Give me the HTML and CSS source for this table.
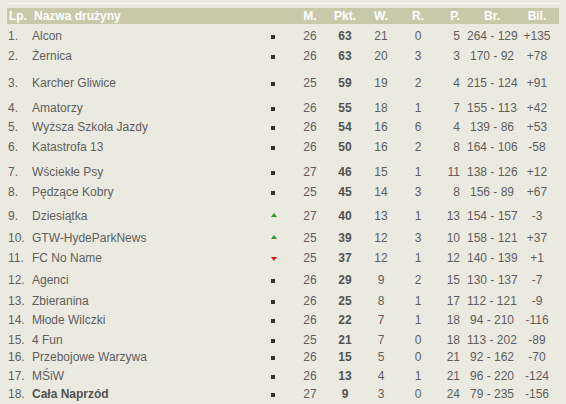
FILE: index.html
```html
<!DOCTYPE html>
<html lang="pl">
<head>
<meta charset="utf-8">
<title>Tabela</title>
<link rel="stylesheet" href="styles.css">
</head>
<body>
<div class="wrap">
  <div class="topline"></div>
  <div class="row head">
    <div class="lp">Lp.</div><div class="name">Nazwa drużyny</div><div class="ind"></div>
    <div class="c">M.</div><div class="c">Pkt.</div><div class="c">W.</div><div class="c">R.</div><div class="p">P.</div><div class="c">Br.</div><div class="c">Bil.</div>
  </div>
  <div class="rows">
    <div class="row"><div class="lp">1.</div><div class="name">Alcon</div><div class="ind"><span class="sq"></span></div><div class="c">26</div><div class="c b">63</div><div class="c">21</div><div class="c">0</div><div class="p">5</div><div class="c">264 - 129</div><div class="c">+135</div></div>
    <div class="row"><div class="lp">2.</div><div class="name">Żernica</div><div class="ind"><span class="sq"></span></div><div class="c">26</div><div class="c b">63</div><div class="c">20</div><div class="c">3</div><div class="p">3</div><div class="c">170 - 92</div><div class="c">+78</div></div>
    <div class="row"><div class="lp">3.</div><div class="name">Karcher Gliwice</div><div class="ind"><span class="sq"></span></div><div class="c">25</div><div class="c b">59</div><div class="c">19</div><div class="c">2</div><div class="p">4</div><div class="c">215 - 124</div><div class="c">+91</div></div>
    <div class="row"><div class="lp">4.</div><div class="name">Amatorzy</div><div class="ind"><span class="sq"></span></div><div class="c">26</div><div class="c b">55</div><div class="c">18</div><div class="c">1</div><div class="p">7</div><div class="c">155 - 113</div><div class="c">+42</div></div>
    <div class="row"><div class="lp">5.</div><div class="name">Wyższa Szkoła Jazdy</div><div class="ind"><span class="sq"></span></div><div class="c">26</div><div class="c b">54</div><div class="c">16</div><div class="c">6</div><div class="p">4</div><div class="c">139 - 86</div><div class="c">+53</div></div>
    <div class="row"><div class="lp">6.</div><div class="name">Katastrofa 13</div><div class="ind"><span class="sq"></span></div><div class="c">26</div><div class="c b">50</div><div class="c">16</div><div class="c">2</div><div class="p">8</div><div class="c">164 - 106</div><div class="c">-58</div></div>
    <div class="row"><div class="lp">7.</div><div class="name">Wściekłe Psy</div><div class="ind"><span class="sq"></span></div><div class="c">27</div><div class="c b">46</div><div class="c">15</div><div class="c">1</div><div class="p">11</div><div class="c">138 - 126</div><div class="c">+12</div></div>
    <div class="row"><div class="lp">8.</div><div class="name">Pędzące Kobry</div><div class="ind"><span class="sq"></span></div><div class="c">25</div><div class="c b">45</div><div class="c">14</div><div class="c">3</div><div class="p">8</div><div class="c">156 - 89</div><div class="c">+67</div></div>
    <div class="row"><div class="lp">9.</div><div class="name">Dziesiątka</div><div class="ind"><span class="up"></span></div><div class="c">27</div><div class="c b">40</div><div class="c">13</div><div class="c">1</div><div class="p">13</div><div class="c">154 - 157</div><div class="c">-3</div></div>
    <div class="row"><div class="lp">10.</div><div class="name">GTW-HydeParkNews</div><div class="ind"><span class="up"></span></div><div class="c">25</div><div class="c b">39</div><div class="c">12</div><div class="c">3</div><div class="p">10</div><div class="c">158 - 121</div><div class="c">+37</div></div>
    <div class="row"><div class="lp">11.</div><div class="name">FC No Name</div><div class="ind"><span class="down"></span></div><div class="c">25</div><div class="c b">37</div><div class="c">12</div><div class="c">1</div><div class="p">12</div><div class="c">140 - 139</div><div class="c">+1</div></div>
    <div class="row"><div class="lp">12.</div><div class="name">Agenci</div><div class="ind"><span class="sq"></span></div><div class="c">26</div><div class="c b">29</div><div class="c">9</div><div class="c">2</div><div class="p">15</div><div class="c">130 - 137</div><div class="c">-7</div></div>
    <div class="row"><div class="lp">13.</div><div class="name">Zbieranina</div><div class="ind"><span class="sq"></span></div><div class="c">26</div><div class="c b">25</div><div class="c">8</div><div class="c">1</div><div class="p">17</div><div class="c">112 - 121</div><div class="c">-9</div></div>
    <div class="row"><div class="lp">14.</div><div class="name">Młode Wilczki</div><div class="ind"><span class="sq"></span></div><div class="c">26</div><div class="c b">22</div><div class="c">7</div><div class="c">1</div><div class="p">18</div><div class="c">94 - 210</div><div class="c">-116</div></div>
    <div class="row"><div class="lp">15.</div><div class="name">4 Fun</div><div class="ind"><span class="sq"></span></div><div class="c">25</div><div class="c b">21</div><div class="c">7</div><div class="c">0</div><div class="p">18</div><div class="c">113 - 202</div><div class="c">-89</div></div>
    <div class="row"><div class="lp">16.</div><div class="name">Przebojowe Warzywa</div><div class="ind"><span class="sq"></span></div><div class="c">26</div><div class="c b">15</div><div class="c">5</div><div class="c">0</div><div class="p">21</div><div class="c">92 - 162</div><div class="c">-70</div></div>
    <div class="row"><div class="lp">17.</div><div class="name">MŚiW</div><div class="ind"><span class="sq"></span></div><div class="c">26</div><div class="c b">13</div><div class="c">4</div><div class="c">1</div><div class="p">21</div><div class="c">96 - 220</div><div class="c">-124</div></div>
    <div class="row"><div class="lp">18.</div><div class="name b">Cała Naprzód</div><div class="ind"><span class="sq"></span></div><div class="c">27</div><div class="c b">9</div><div class="c">3</div><div class="c">0</div><div class="p">24</div><div class="c">79 - 235</div><div class="c">-156</div></div>
  </div>
</div>
</body>
</html>
```

FILE: styles.css
```css
html, body {
  margin: 0;
  padding: 0;
  background: #ebeae0;
}
body {
  font-family: "Liberation Sans", Arial, sans-serif;
  font-size: 12px;
  color: #5e5e5e;
}
.wrap {
  padding: 3px 0 0 7px;
}
.topline {
  width: 553px;
  height: 1px;
  background: #fbfbf6;
  margin-bottom: 4px;
}
.row {
  display: grid;
  grid-template-columns: 24px 235px 27px 34px 36px 36px 38px 30px 50px 40px;
  line-height: 16px;
  white-space: nowrap;
  align-items: start;
}
.head {
  width: 552px;
  height: 16px;
  background: #c8c9a9;
  color: #fff;
  font-weight: bold;
}
.head .lp { padding-left: 2px; }
.head .name { padding-left: 3px; }
.rows {
  padding-top: 4px;
}
.lp { padding-left: 1px; }
.name { padding-left: 1px; }
.ind {
  padding-left: 5px;
  height: 16px;
  display: flex;
  align-items: center;
}
.c { text-align: center; }
.p { text-align: right; padding-right: 7px; }
.b { font-weight: bold; color: #525252; }
.sq {
  display: block;
  width: 4px;
  height: 4px;
  background: #333;
  margin-top: 1px;
}
.up {
  display: block;
  width: 0;
  height: 0;
  border-left: 3px solid transparent;
  border-right: 3px solid transparent;
  border-bottom: 4px solid #2a9a2a;
  margin-top: -2px;
}
.down {
  display: block;
  width: 0;
  height: 0;
  border-left: 3px solid transparent;
  border-right: 3px solid transparent;
  border-top: 4px solid #e01818;
  margin-top: 2px;
}
.rows .row:nth-child(1) { height: 20px; }
.rows .row:nth-child(2) { height: 27px; }
.rows .row:nth-child(3) { height: 25px; }
.rows .row:nth-child(4) { height: 19px; }
.rows .row:nth-child(5) { height: 20px; }
.rows .row:nth-child(6) { height: 25px; }
.rows .row:nth-child(7) { height: 20px; }
.rows .row:nth-child(8) { height: 24px; }
.rows .row:nth-child(9) { height: 22px; }
.rows .row:nth-child(10) { height: 20px; }
.rows .row:nth-child(11) { height: 22px; }
.rows .row:nth-child(12) { height: 21px; }
.rows .row:nth-child(13) { height: 19px; }
.rows .row:nth-child(14) { height: 20px; }
.rows .row:nth-child(15) { height: 17px; }
.rows .row:nth-child(16) { height: 19px; }
.rows .row:nth-child(17) { height: 18px; }
.rows .row:nth-child(18) { height: 15px; }
```
